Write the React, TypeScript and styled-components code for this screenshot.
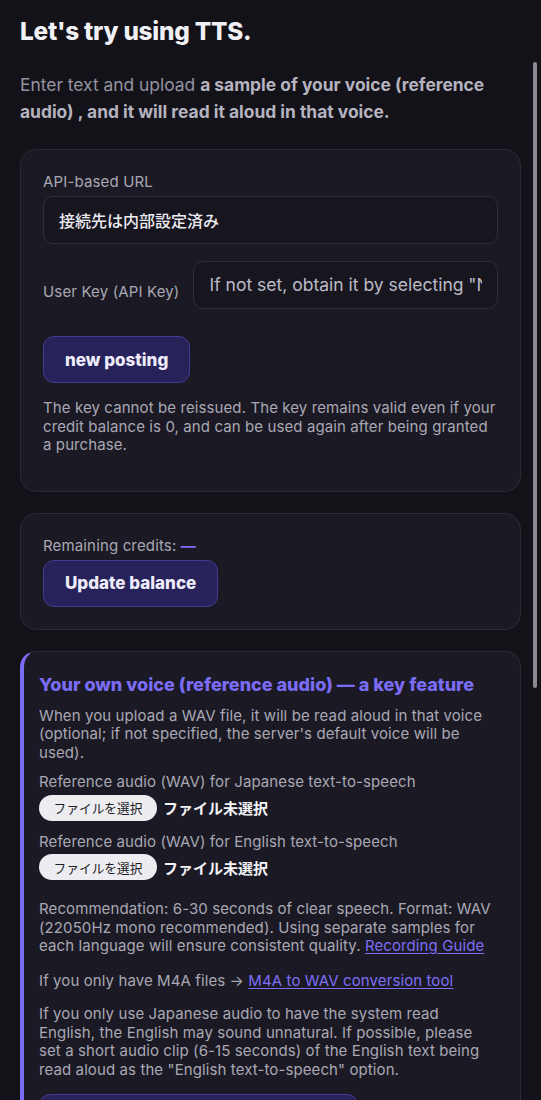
import React from "react";
import styled, { createGlobalStyle } from "styled-components";

const GlobalStyle = createGlobalStyle`
  html, body {
    margin: 0;
    padding: 0;
    background: #131218;
    overflow: hidden;
  }
  body {
    font-family: Inter, "Noto Sans CJK JP", "Noto Sans", sans-serif;
    color: #a9a8b4;
    -webkit-font-smoothing: antialiased;
  }
  * {
    box-sizing: border-box;
  }
`;

const Page = styled.main`
  padding: 16px 20px 40px;
  display: flex;
  flex-direction: column;
`;

const Title = styled.h1`
  margin: 0;
  font-size: 24.3px;
  line-height: 30px;
  font-weight: 800;
  color: #f1f0f5;
  letter-spacing: -0.2px;
`;

const Lead = styled.p`
  margin: 25px 0 0;
  font-size: 17.4px;
  line-height: 27px;
  color: #9493a0;
  strong {
    color: #b4b3bf;
    font-weight: 700;
  }
`;

const Card = styled.section<{ $accent?: boolean }>`
  margin-top: 21px;
  background: #1b1a24;
  border: 1px solid #2b2a36;
  border-left: ${(p) => (p.$accent ? "4px solid #7b6cf6" : "1px solid #2b2a36")};
  border-radius: 16px;
  padding: ${(p) => (p.$accent ? "22px 22px 22px 15px" : "22px")};
  display: flex;
  flex-direction: column;
  &:first-of-type {
    margin-top: 24px;
  }
`;

const FieldLabel = styled.label`
  font-size: 15px;
  line-height: 20px;
  letter-spacing: 0.15px;
  color: #a8a7b3;
  white-space: nowrap;
`;

const TextInput = styled.input`
  width: 100%;
  min-width: 0;
  height: 48px;
  background: #17161f;
  border: 1px solid #2e2d3a;
  border-radius: 10px;
  padding: 0 15px;
  font-family: inherit;
  font-size: 16px;
  font-weight: 500;
  color: #ecebf2;
  outline: none;
  &::placeholder {
    color: #bcbbc5;
    font-size: 17.5px;
    font-weight: 400;
  }
`;

const StackedField = styled.div`
  display: flex;
  flex-direction: column;
  gap: 4px;
`;

const InlineField = styled.div`
  display: flex;
  align-items: flex-end;
  gap: 14px;
  margin-top: 17px;
  ${FieldLabel} {
    padding-bottom: 7px;
  }
`;

const PrimaryButton = styled.button<{ $top?: number; $width?: number }>`
  align-self: flex-start;
  margin-top: ${(p) => p.$top ?? 0}px;
  height: 47px;
  width: ${(p) => (p.$width ? `${p.$width}px` : "auto")};
  padding: 0 21px;
  background: #27235a;
  border: 1px solid #423b92;
  border-radius: 11px;
  font-family: inherit;
  font-size: 17px;
  font-weight: 800;
  color: #eeecfb;
  cursor: pointer;
`;

const Note = styled.p<{ $top: number }>`
  margin: ${(p) => p.$top}px 0 0;
  font-size: 15px;
  line-height: 18.5px;
  letter-spacing: 0.1px;
  color: #a9a8b4;
  a {
    color: #7d6ef6;
    text-decoration: underline;
    text-underline-offset: 2px;
  }
`;

const CardFoot = styled.div`
  height: 14px;
`;

const Credits = styled.div`
  font-size: 15px;
  line-height: 20px;
  letter-spacing: 0.15px;
  color: #a8a7b3;
  margin-bottom: 4px;
  span {
    color: #7b6cf6;
    font-weight: 700;
  }
`;

const FeatureTitle = styled.h2`
  margin: 0;
  font-size: 18px;
  line-height: 22px;
  font-weight: 800;
  color: #7b6cf6;
`;

const FileRow = styled.div`
  display: flex;
  align-items: center;
  gap: 6px;
  margin-top: 3px;
`;

const FileButton = styled.button`
  height: 26px;
  width: 118px;
  border: none;
  border-radius: 13px;
  background: #ececf1;
  color: #1d1d22;
  font-family: inherit;
  font-size: 12.7px;
  padding: 0;
`;

const FileStatus = styled.span`
  font-size: 15px;
  font-weight: 600;
  color: #f3f3f7;
`;

const ScrollThumb = styled.div`
  position: fixed;
  left: 533px;
  top: 62px;
  width: 4px;
  height: 626px;
  border-radius: 3px;
  background: #8a8992;
`;

const FilePick = ({ label, top }: { label: string; top: number }) => (
  <>
    <Note $top={top}>{label}</Note>
    <FileRow>
      <FileButton>ファイルを選択</FileButton>
      <FileStatus>ファイル未選択</FileStatus>
    </FileRow>
  </>
);

const App = () => {
  return (
    <>
      <GlobalStyle />
      <Page>
        <Title>Let's try using TTS.</Title>
        <Lead>
          Enter text and upload{" "}
          <strong>a sample of your voice (reference audio) , and it will read it aloud in that voice.</strong>
        </Lead>

        <Card>
          <StackedField>
            <FieldLabel>API-based URL</FieldLabel>
            <TextInput value="接続先は内部設定済み" readOnly />
          </StackedField>
          <InlineField>
            <FieldLabel>User Key (API Key)</FieldLabel>
            <TextInput placeholder={'If not set, obtain it by selecting "New posting"'} />
          </InlineField>
          <PrimaryButton $top={27}>new posting</PrimaryButton>
          <Note $top={16}>
            The key cannot be reissued. The key remains valid even if your credit balance is 0, and can be
            used again after being granted a purchase.
          </Note>
          <CardFoot />
        </Card>

        <Card>
          <Credits>
            Remaining credits: <span>—</span>
          </Credits>
          <PrimaryButton>Update balance</PrimaryButton>
        </Card>

        <Card $accent>
          <FeatureTitle>Your own voice (reference audio) — a key feature</FeatureTitle>
          <Note $top={11}>
            When you upload a WAV file, it will be read aloud in that voice (optional; if not specified, the
            server's default voice will be used).
          </Note>
          <FilePick label="Reference audio (WAV) for Japanese text-to-speech" top={11} />
          <FilePick label="Reference audio (WAV) for English text-to-speech" top={12} />
          <Note $top={20}>
            Recommendation: 6-30 seconds of clear speech. Format: WAV (22050Hz mono recommended). Using
            separate samples for each language will ensure consistent quality. <a href="#">Recording Guide</a>
          </Note>
          <Note $top={16}>
            If you only have M4A files → <a href="#">M4A to WAV conversion tool</a>
          </Note>
          <Note $top={15}>
            If you only use Japanese audio to have the system read English, the English may sound unnatural.
            If possible, please set a short audio clip (6-15 seconds) of the English text being read aloud as
            the "English text-to-speech" option.
          </Note>
          <PrimaryButton $top={15} $width={319}>
            Generate and play audio
          </PrimaryButton>
        </Card>
      </Page>
      <ScrollThumb />
    </>
  );
};

export default App;
